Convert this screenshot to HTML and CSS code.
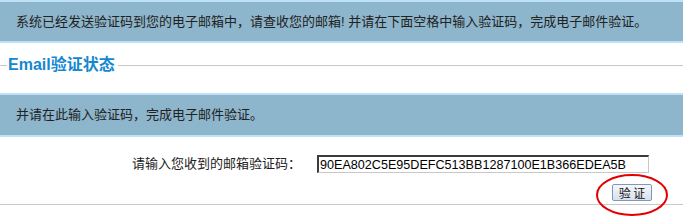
FILE: index.html
```html
<!DOCTYPE html>
<html lang="zh-CN">
<head>
  <meta charset="UTF-8">
  <meta name="viewport" content="width=device-width, initial-scale=1.0">
  <title>Email验证</title>
  <link rel="stylesheet" href="styles.css">
</head>
<body>
  <div class="notice">系统已经发送验证码到您的电子邮箱中，请查收您的邮箱! 并请在下面空格中输入验证码，完成电子邮件验证。</div>

  <div class="legend"><span class="legend-text">Email验证状态</span></div>

  <div class="notice notice-sub">并请在此输入验证码，完成电子邮件验证。</div>

  <form class="verify" onsubmit="return false">
    <div class="row">
      <label class="label" for="code">请输入您收到的邮箱验证码：</label>
      <input class="code" id="code" type="text" value="90EA802C5E95DEFC513BB1287100E1B366EDEA5B">
    </div>
    <div class="row row-btn">
      <span class="btn-wrap">
        <button class="btn" type="submit">验 证</button>
        <svg class="circle" width="74" height="44" viewBox="0 0 74 44">
          <ellipse cx="37" cy="22" rx="35" ry="20" fill="none" stroke="#e30000" stroke-width="2"/>
        </svg>
      </span>
    </div>
  </form>
  <div class="bottom-line"></div>
</body>
</html>
```

FILE: styles.css
```css
html, body {
    min-height: 221px;
}
body {
    margin: 0;
    font-family: "Liberation Sans", "Noto Sans CJK SC", sans-serif;
    font-size: 13px;
    color: #333;
    background: #fff;
}

.notice {
    height: 39px;
    line-height: 39px;
    padding-left: 16px;
    background-color: #8db5cc;
    border-top: 2px solid #bee1f5;
    border-bottom: 2px solid #bee1f5;
    color: #222;
    white-space: nowrap;
}
.notice-sub {
    margin-top: 18px;
    height: 40px;
    line-height: 40px;
}

.legend {
    display: flex;
    align-items: center;
    margin-top: 12px;
    height: 20px;
}
.legend::before,
.legend::after {
    content: "";
    height: 1px;
    background: #c8c8c8;
}
.legend::before {
    width: 7px;
}
.legend::after {
    flex: 1;
}
.legend-text {
    padding: 0 3px 0 1px;
    font-size: 16px;
    font-weight: bold;
    color: #1488d0;
    line-height: 20px;
}

.verify {
    margin: 0;
}
.row {
    display: flex;
    align-items: center;
}
.row:first-child {
    margin-top: 18px;
    height: 18px;
}
.label {
    width: 301px;
    line-height: 18px;
    text-align: right;
    color: #222;
}
.code {
    margin-left: 16px;
    width: 332px;
    height: 18px;
    box-sizing: border-box;
    padding: 0 1px;
    border-style: solid;
    border-width: 2px 1px 1px 2px;
    border-color: #3c3c3c #c8c8c8 #c8c8c8 #3c3c3c;
    font-family: "Liberation Sans", Arial, sans-serif;
    font-size: 12.6px;
    color: #000;
    outline: none;
}

.row-btn {
    margin-top: 11px;
    height: 17px;
    padding-left: 612px;
}
.btn-wrap {
    position: relative;
    display: inline-block;
}
.btn {
    display: block;
    width: 40px;
    height: 17px;
    padding: 0;
    font-family: "Noto Sans CJK SC", sans-serif;
    font-size: 12px;
    line-height: 15px;
    color: #111;
    background: linear-gradient(#f5f7fa, #d9e1ec);
    border: 1px solid #7a9abb;
    border-radius: 2px;
}
.circle {
    position: absolute;
    left: -17px;
    top: -11px;
    pointer-events: none;
}

.bottom-line {
    margin-top: 3px;
    border-top: 1px solid #c8c8c8;
}
```
